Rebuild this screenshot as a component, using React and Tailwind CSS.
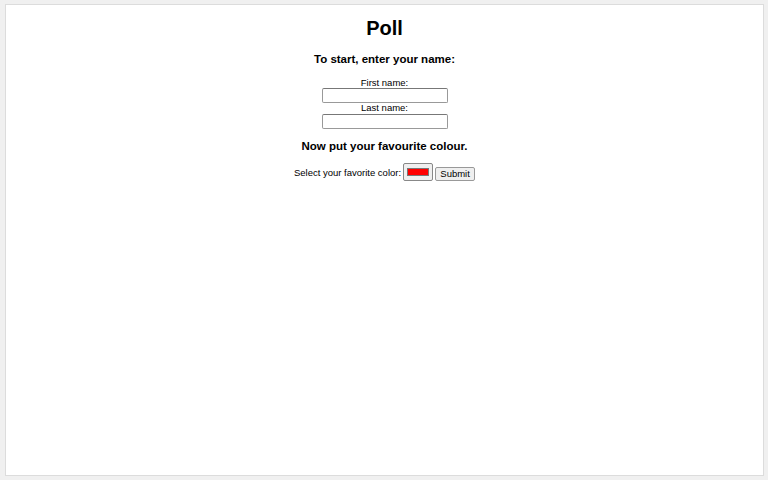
export default function App() {
  return (
    <div className="w-[768px] h-[480px] bg-[#f0f0f0] p-[4px] pl-[5px] pr-[4px]" style={{ fontFamily: '"Liberation Sans", Arial, sans-serif' }}>
      <div className="w-full h-full bg-white border border-[#dcdcdc] flex flex-col items-center text-black">
        <h1 className="text-[20px] font-bold leading-none mt-[13px]">Poll</h1>
        <h3 className="text-[11.5px] font-bold leading-none mt-[16px]">To start, enter your name:</h3>
        <div className="text-[9.5px] leading-none mt-[12px]">First name:</div>
        <input className="w-[126px] h-[15px] border border-[#999] border-t-[#777] rounded-[2px] mt-[1px] bg-white" />
        <div className="text-[9.5px] leading-none mt-[0px]">Last name:</div>
        <input className="w-[126px] h-[15px] border border-[#999] border-t-[#777] rounded-[2px] mt-[1px] bg-white" />
        <h3 className="text-[11.5px] font-bold leading-none mt-[12px]">Now put your favourite colour.</h3>
        <div className="flex items-center mt-[11px] text-[9.5px]">
          <span className="mr-[2px] mt-[2px]">Select your favorite color:</span>
          <div className="w-[30px] h-[18px] border border-[#888] rounded-[2px] bg-[#efefef] px-[3px] py-[4px] flex">
            <div className="flex-1 bg-[#ff0000] border border-[#777]" />
          </div>
          <button className="ml-[2px] h-[14px] w-[40px] border border-[#999] rounded-[2px] bg-[#efefef] text-[9.5px] leading-none mt-[4px]">Submit</button>
        </div>
      </div>
    </div>
  );
}
